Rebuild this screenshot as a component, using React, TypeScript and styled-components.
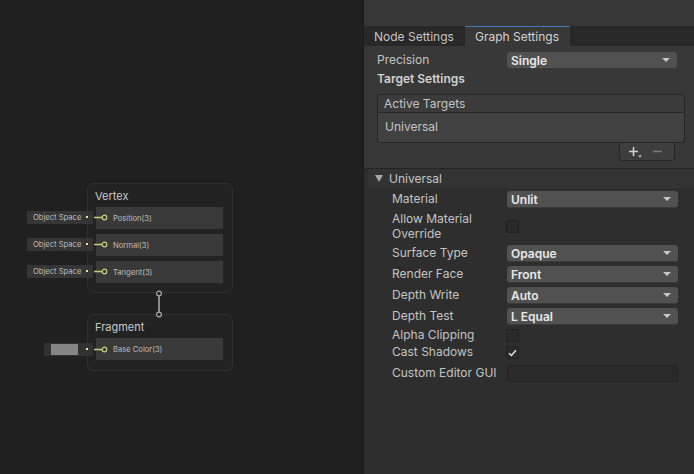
import React from "react";
import styled, { createGlobalStyle } from "styled-components";

const Global = createGlobalStyle`
  html, body { margin: 0; padding: 0; background: #202020; }
  body { font-family: Inter, "Noto Sans", sans-serif; }
  #root { width: 694px; height: 474px; }
`;

const Frame = styled.div`
  display: flex;
  width: 694px;
  height: 474px;
  overflow: hidden;
`;

/* ---------- Canvas ---------- */
const Canvas = styled.div`
  position: relative;
  width: 363px;
  flex: none;
  background: #202020;
  border-right: 1px solid #191919;
`;

const Node = styled.div<{ $x: number; $y: number; $h: number }>`
  position: absolute;
  left: ${(p) => p.$x}px;
  top: ${(p) => p.$y}px;
  width: 146px;
  height: ${(p) => p.$h}px;
  box-sizing: border-box;
  background: #222222;
  border: 1px solid #2f2f2f;
  border-radius: 6px;
  display: flex;
  flex-direction: column;
  padding: 4px 9px 0 7px;
  gap: 5px;
`;

const NodeTitle = styled.div`
  font-size: 11px;
  color: #c8c8c8;
  height: 16px;
  line-height: 16px;
  margin-bottom: -2px;
`;

const PortRow = styled.div`
  height: 22px;
  margin-left: 1px;
  background: #393939;
  display: flex;
  align-items: center;
  padding-left: 17px;
  font-size: 7.6px;
  color: #bdbdbd;
`;

const Input = styled.div<{ $x: number; $y: number }>`
  position: absolute;
  left: ${(p) => p.$x}px;
  top: ${(p) => p.$y}px;
  display: flex;
  align-items: center;
`;

const InputBox = styled.div<{ $w: number; $swatch?: boolean }>`
  width: ${(p) => p.$w}px;
  height: 13px;
  box-sizing: border-box;
  background: ${(p) => (p.$swatch ? "#313131" : "#353535")};
  display: flex;
  align-items: center;
  padding-left: ${(p) => (p.$swatch ? 7 : 6)}px;
  font-size: 7.6px;
  color: #bdbdbd;
  position: relative;
`;

const Swatch = styled.div`
  width: 27px;
  height: 11px;
  background: #858585;
`;

const Dot = styled.div`
  position: absolute;
  right: 5px;
  top: 5px;
  width: 2px;
  height: 2px;
  background: #e6e9a6;
`;

const Wire = styled.svg`
  display: block;
`;

const Edge = styled.svg`
  position: absolute;
  left: 155px;
  top: 289px;
`;

/* ---------- Inspector ---------- */
const Panel = styled.div`
  flex: 1;
  background: #2e2e2e;
  display: flex;
  flex-direction: column;
`;

const TopBar = styled.div`
  height: 26px;
  background: #383838;
  flex: none;
`;

const TabRow = styled.div`
  height: 20px;
  background: #282828;
  display: flex;
  flex: none;
`;

const Tab = styled.div<{ $active?: boolean }>`
  box-sizing: border-box;
  height: 20px;
  padding: 0 10px;
  display: flex;
  align-items: center;
  font-size: 12px;
  color: ${(p) => (p.$active ? "#d2d2d2" : "#c4c4c4")};
  background: ${(p) => (p.$active ? "#383838" : "#282828")};
  border-top: 1px solid ${(p) => (p.$active ? "#3a79bb" : "transparent")};
  width: ${(p) => (p.$active ? 105 : 101)}px;
`;

const Section = styled.div`
  background: #383838;
  padding: 6px 9px 7px 13px;
  border-bottom: 1px solid #242424;
  display: flex;
  flex-direction: column;
`;

const Field = styled.div<{ $labelW: number; $h?: number }>`
  display: grid;
  grid-template-columns: ${(p) => p.$labelW}px 170px;
  align-items: center;
  min-height: ${(p) => p.$h ?? 17}px;
`;

const Label = styled.div`
  font-size: 12px;
  line-height: 14.5px;
  color: #c4c4c4;
`;

const Heading = styled.div`
  font-size: 12px;
  font-weight: 600;
  color: #d0d0d0;
  line-height: 16px;
  margin-top: 2px;
`;

const Dropdown = styled.div`
  height: 17px;
  box-sizing: border-box;
  background: #515151;
  border-radius: 3px;
  border-bottom: 1px solid #3a3a3a;
  display: flex;
  align-items: center;
  justify-content: space-between;
  padding: 0 7px 0 4px;
  font-size: 12px;
  font-weight: 600;
  color: #e8e8e8;
`;

const Arrow = styled.div`
  width: 0;
  height: 0;
  border-left: 4px solid transparent;
  border-right: 4px solid transparent;
  border-top: 4px solid #c8c8c8;
`;

const List = styled.div`
  margin-top: 7px;
  display: flex;
  flex-direction: column;
`;

const ListHead = styled.div`
  height: 19px;
  box-sizing: border-box;
  background: #3b3b3b;
  border: 1px solid #262626;
  border-radius: 3px 3px 0 0;
  display: flex;
  align-items: center;
  padding-left: 6px;
  font-size: 12px;
  color: #c4c4c4;
`;

const ListBody = styled.div`
  height: 30px;
  box-sizing: border-box;
  background: #414141;
  border: 1px solid #262626;
  border-top: none;
  border-radius: 0 0 3px 3px;
  display: flex;
  align-items: center;
  padding-left: 7px;
  padding-bottom: 2px;
  font-size: 12px;
  color: #c4c4c4;
`;

const ListFooter = styled.div`
  align-self: flex-end;
  margin-right: 10px;
  width: 56px;
  height: 18px;
  box-sizing: border-box;
  background: #3e3e3e;
  border: 1px solid #262626;
  border-top: none;
  border-radius: 0 0 4px 4px;
  display: flex;
  align-items: center;
  justify-content: space-between;
  padding: 0 12px 0 9px;
`;

const FooterBtn = styled.svg`
  display: block;
`;

const Foldout = styled.div`
  height: 19px;
  margin-left: 4px;
  background: #333333;
  display: flex;
  align-items: center;
  gap: 6px;
  padding-left: 7px;
  font-size: 12px;
  color: #c4c4c4;
  flex: none;
`;

const FoldArrow = styled.div`
  width: 0;
  height: 0;
  border-left: 4px solid transparent;
  border-right: 4px solid transparent;
  border-top: 7px solid #a8a8a8;
`;

const Rows = styled.div`
  display: flex;
  flex-direction: column;
  padding-left: 28px;
  padding-top: 1px;
`;

const Row = styled.div<{ $h: number; $pt?: number }>`
  display: grid;
  grid-template-columns: 115px 171px;
  align-items: center;
  height: ${(p) => p.$h}px;
  box-sizing: border-box;
  padding-top: ${(p) => p.$pt ?? 0}px;
`;

const Check = styled.div`
  width: 13px;
  height: 13px;
  box-sizing: border-box;
  background: #2a2a2a;
  border: 1px solid #202020;
  border-radius: 2px;
  margin-left: -1px;
  display: flex;
  align-items: center;
  justify-content: center;
`;

const TextField = styled.div`
  height: 17px;
  box-sizing: border-box;
  background: #2a2a2a;
  border: 1px solid #212121;
  border-radius: 3px;
`;

type Port = { name: string; y: number };
const vertexPorts: Port[] = [
  { name: "Position(3)", y: 211 },
  { name: "Normal(3)", y: 238 },
  { name: "Tangent(3)", y: 265 },
];

const PortWire = () => (
  <Wire width="16" height="13" viewBox="0 0 16 13">
    <line x1="1" y1="6.5" x2="9" y2="6.5" stroke="#c3c77c" strokeWidth="1.6" />
    <circle cx="11.5" cy="6.5" r="2.3" fill="none" stroke="#c9cd84" strokeWidth="1.2" />
  </Wire>
);

const DropRow = ({ label, value }: { label: string; value: string }) => (
  <Row $h={21}>
    <Label>{label}</Label>
    <Dropdown>
      {value}
      <Arrow />
    </Dropdown>
  </Row>
);

const CheckMark = () => (
  <svg width="9" height="8" viewBox="0 0 9 8">
    <path d="M1 4.2 L3.4 6.5 L8 1.2" fill="none" stroke="#e6e6e6" strokeWidth="1.4" />
  </svg>
);

export default function App() {
  return (
    <>
      <Global />
      <Frame>
        <Canvas>
          <Node $x={87} $y={183} $h={110}>
            <NodeTitle>Vertex</NodeTitle>
            {vertexPorts.map((p) => (
              <PortRow key={p.name}>{p.name}</PortRow>
            ))}
          </Node>
          <Node $x={87} $y={314} $h={57}>
            <NodeTitle>Fragment</NodeTitle>
            <PortRow>Base Color(3)</PortRow>
          </Node>
          {vertexPorts.map((p) => (
            <Input key={p.name} $x={27} $y={p.y}>
              <InputBox $w={66}>
                Object Space
                <Dot />
              </InputBox>
              <PortWire />
            </Input>
          ))}
          <Input $x={44} $y={343}>
            <InputBox $w={49} $swatch>
              <Swatch />
              <Dot />
            </InputBox>
            <PortWire />
          </Input>
          <Edge width="8" height="30" viewBox="0 0 8 30">
            <line x1="4" y1="7" x2="4" y2="23" stroke="#a8a8a8" strokeWidth="1.6" />
            <circle cx="4" cy="4.5" r="2.4" fill="#202020" stroke="#a8a8a8" strokeWidth="1.2" />
            <circle cx="4" cy="25.5" r="2.4" fill="#202020" stroke="#a8a8a8" strokeWidth="1.2" />
          </Edge>
        </Canvas>

        <Panel>
          <TopBar />
          <TabRow>
            <Tab>Node Settings</Tab>
            <Tab $active>Graph Settings</Tab>
          </TabRow>
          <Section>
            <Field $labelW={130}>
              <Label>Precision</Label>
              <Dropdown>
                Single
                <Arrow />
              </Dropdown>
            </Field>
            <Heading>Target Settings</Heading>
            <List>
              <ListHead>Active Targets</ListHead>
              <ListBody>Universal</ListBody>
              <ListFooter>
                <FooterBtn width="14" height="12" viewBox="0 0 14 12">
                  <path d="M4.5 1 V10 M0 5.5 H9" stroke="#d0d0d0" strokeWidth="1.6" />
                  <path d="M9 9.5 H13 L11 11.5 Z" fill="#d0d0d0" />
                </FooterBtn>
                <FooterBtn width="9" height="12" viewBox="0 0 9 12">
                  <path d="M0 5.5 H9" stroke="#7a7a7a" strokeWidth="1.6" />
                </FooterBtn>
              </ListFooter>
            </List>
          </Section>
          <Foldout>
            <FoldArrow />
            Universal
          </Foldout>
          <Rows>
            <DropRow label="Material" value="Unlit" />
            <Row $h={33}>
              <Label>
                Allow Material
                <br />
                Override
              </Label>
              <Check />
            </Row>
            <DropRow label="Surface Type" value="Opaque" />
            <DropRow label="Render Face" value="Front" />
            <DropRow label="Depth Write" value="Auto" />
            <DropRow label="Depth Test" value="L Equal" />
            <Row $h={17}>
              <Label>Alpha Clipping</Label>
              <Check />
            </Row>
            <Row $h={17}>
              <Label>Cast Shadows</Label>
              <Check>
                <CheckMark />
              </Check>
            </Row>
            <Row $h={22} $pt={3}>
              <Label>Custom Editor GUI</Label>
              <TextField />
            </Row>
          </Rows>
        </Panel>
      </Frame>
    </>
  );
}
